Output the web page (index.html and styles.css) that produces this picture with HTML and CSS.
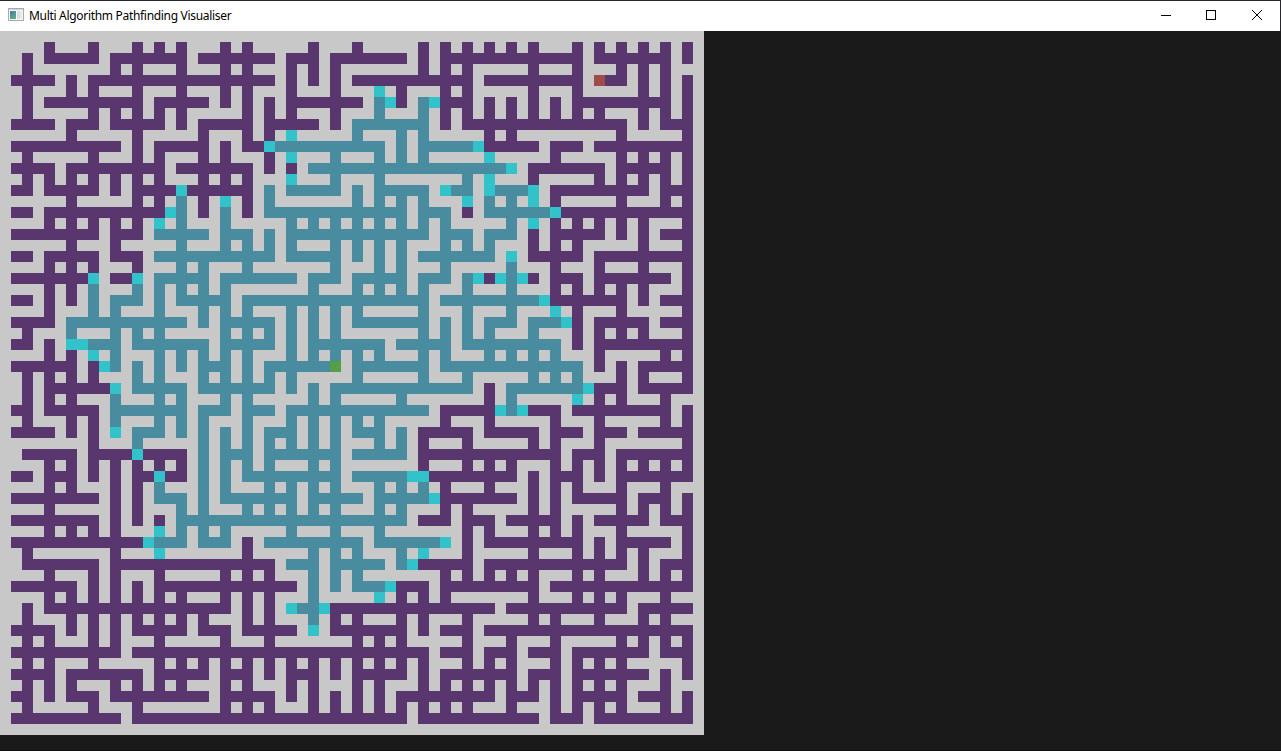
FILE: index.html
```html
<!DOCTYPE html>
<html lang="en">
<head>
<meta charset="utf-8">
<title>Multi Algorithm Pathfinding Visualiser</title>
<link rel="stylesheet" href="styles.css">
</head>
<body>
<div class="window">
  <header class="titlebar">
    <svg class="app-icon" width="16" height="14" viewBox="0 0 16 14" shape-rendering="crispEdges">
      <defs>
        <linearGradient id="pane" x1="0" y1="0" x2="0.6" y2="1">
          <stop offset="0" stop-color="#4478b0"/>
          <stop offset="1" stop-color="#5cb07c"/>
        </linearGradient>
      </defs>
      <rect x="0.5" y="0.5" width="15" height="12" fill="#f6f6f6" stroke="#a6abb2"/>
      <rect x="1" y="1" width="14" height="1" fill="#cfd3d7"/>
      <rect x="2" y="3" width="6" height="8" fill="url(#pane)"/>
      <rect x="9" y="3" width="3" height="8" fill="#dcdfe4"/>
      <rect x="12" y="3" width="2" height="8" fill="#e4ece4"/>
    </svg>
    <span class="title">Multi Algorithm Pathfinding Visualiser</span>
    <div class="controls">
      <span class="control minimize"><svg width="10" height="10" viewBox="0 0 10 10" shape-rendering="crispEdges"><path d="M0 5.5H10" stroke="#000" fill="none"/></svg></span>
      <span class="control"><svg width="10" height="10" viewBox="0 0 10 10" shape-rendering="crispEdges"><path d="M.5 .5H9.5V9.5H.5Z" stroke="#000" fill="none"/></svg></span>
      <span class="control"><svg width="10" height="10" viewBox="0 0 10 10"><path d="M0 0L10 10M10 0L0 10" stroke="#000" fill="none"/></svg></span>
    </div>
  </header>
  <main class="stage"><div class="maze" id="maze"></div></main>
</div>
<script src="maze.js"></script>
</body>
</html>
```
FILE: styles.css
```css
html, body { margin: 0; height: 100%; }
body { overflow: hidden; background: #1a1a1a; }
.window {
  box-sizing: border-box;
  width: 1281px;
  height: 751px;
  display: flex;
  flex-direction: column;
  border-top: 1px solid #28262b;
  border-bottom: 1px solid #111;
}
.titlebar {
  box-sizing: border-box;
  height: 30px;
  flex: none;
  display: flex;
  align-items: center;
  background: #fff;
  border-right: 1px solid #28262b;
  padding-left: 8px;
}
.app-icon { display: block; flex: none; margin-right: 5px; margin-bottom: 2px; }
.title {
  font: 12px/16px "Noto Sans", "Open Sans", sans-serif;
  letter-spacing: -0.31px;
  color: #000;
  white-space: nowrap;
}
.controls { display: flex; margin-left: auto; height: 100%; }
.control { box-sizing: border-box; width: 46px; display: flex; align-items: center; justify-content: center; padding-bottom: 2px; }
.minimize { padding-left: 2px; }
.control svg { display: block; }
.stage { flex: 1; background: #1a1a1a; }
.maze {
  width: 704px;
  display: grid;
  grid-template-columns: repeat(64, 11px);
  grid-auto-rows: 11px;
  background: #c8c8c8;
}
.open { background: #5a366e; }
.visited { background: #4a8c9f; }
.frontier { background: #32c3ca; }
.start { background: #559f46; }
.goal { background: #a04b4b; }
```
FILE: maze.js
```js
// One line per grid row, split into blocks of 22 columns by "/".
// Each entry is a column or a range of columns inside its block;
// a prefix sets the kind of cell: t visited, c frontier, s start, g goal.
const rows = `
//
4 8 12 14 16 20 / 0 6 10 16 18 20 / 0 2 4 8 10 12 14 16 18
2 4-8 10-16 18-21 / 0-2 4-6 8-14 16 18-21 / 0-8 10-16 18
2 10 12 16 20 / 0 4 6 8 16 18 20 / 4 8 12 14 16
1-4 6 8-21 / 0-2 4 6 8 10-20 / 0-8 g10 11-12 14 16 18
2 6 8 12 16 20 / 0 4 8 c12 14 18 20 / 4 8 14 16 18
2 4-12 14-18 20 / 0 2 4-10 t12 c13 14 t16 c17 18-20 / 0 2 4 6 8-16 18
2 8 10 12 14 16 / 0 2 4 8 t12 t16 18 20 / 0 2 4 6 8 10 14 16 18
1-4 6-8 10-14 16 18-21 / 0 2-6 8 t10-16 18 20-21 / 0-12 14 16-18
6 12 18 / 0 2 c4 t10 t14 t16 / 0 2 12 18
1-10 12 14-18 20 / 0-1 c2 t3-12 t14 t16-20 c21 / 0-4 6-8 10-18
2 8 12 14 18 20 / 2 c4 t8 t12 t14 t16 / c0 6 12 14 16 18
1-4 6-14 16-21 / 0 2 4 t6-21 / t0-1 c2 4-10 12-16 18
2 4 6 8 10 12 14 18 20 / 0 c4 t8 t12 t20 / c0 4 10 12 14 16 18
1-2 4-8 10 12-15 c16 17-21 / 0 t2 t4-8 t10 t12-16 c18 t19-20 / c0 t1-3 c4 6-14 16-18
6 12 14 t16 18 c20 / 0 t2 t10 t12 t14 t16 c20 / t0 t2 c4 6 12 16 18
1-2 4-14 c15 t16 18 t20 / 0 t2-14 t16-18 20 / t0-5 c6 7-18
4 6 8 10 12 c14 t16 t20 / t4 t6 t8 t10 t12 t14 t16 t18 / t2 c4 6 8 10 12 14 18
1-8 10-12 t14-18 t20-21 / t0 t2 t4-16 t18-20 / t0-2 4 6-10 12 14 16-18
6 10 t16 t20 / t0 t2 t4 t8 t10 t12 t14 t18 t20 / t0 4 6 8 14 18
1-2 4-8 10-12 t14-21 / t0-2 t4-8 t10 t12 t14 t16-21 / t0 c2 4-8 10-18
4 6 8 12 t16 t18 / t0 t8 t12 t14 t18 / t2 6 10 14 18
1-7 c8 10-11 c12 t14-18 t20-21 / t0-4 t6-8 t10-14 t16-18 t20 c21 / 0 c1 t2 c3 4 6-8 10-16 18
4 6 t8 t12 t14 t16 t18 t20 / t6 t10 t12 t14 t16 t20 / t2 6 8 10 12 14 18
1-2 4 6 t8 t10-12 t14 t16-20 / t0-16 t18-21 / t0-4 c5 6-12 14 16-18
4 t8 t10 t14 t18 t20 / t0 t4 t6 t8 t10 t16 t20 / t2 c6 8 12 18
1-4 t6-16 t18 t20-21 / t0-2 t4 t6 t8 t10-16 t18 t20 / t0-2 t4-6 c7 8 10-14 16-18
2 t6 t10 t12 t14 t20 / t0 t2 t4 t6 t8 t16 t18 t20 / t0 t4 8 10 12 14 18
1-2 4 c6-7 t8-10 t12-18 t20-21 / t0-2 t4 t6-12 t14-18 t20-21 / t0-6 8 10-18
4 6 c8 t10 t14 t16 t18 t20 / t0 t4 t6 t8 t10 t12 t16 t18 / t0 t2 t4 t6 10 16 18
1-6 8 c9 t10 t12 t14 t16 t18-20 / t0 t2-7 s8 t10-16 t18-21 / t0-8 10 12 14-18
2 4 6 8 t12 t14 t18 t20 / t0 t2 t4 t10 t16 t20 / t4 t6 t8 12 14 18
2 4-9 c10 t12-16 t18-21 / t0-2 t4 t6 t8-20 / 0 t2-8 c9 10-12 14-18
2 4 6 t10 t14 t16 t20 / t0 t6 t8 t14 / 0 t2 c8 10 12 16
1-2 4-8 t10-16 t18-20 / t0-2 t4-16 18-21 / 0 c1 t2 c3 4-6 8-16 18
2 6 8 t10 t14 t16 t18 / t0 t4 t6 t8 t10 t12 18 / 0 6 10 16 18
1-4 6 8 c10 t12-14 t16 t18 t20 / t0 t2-4 t6 t8 t10-12 t14 16-20 / 0-4 6-8 10-12 14-18
8 t12 t18 t20 / t0 t2 t4 t6 t8 t12 t14 16 20 / 4 6 10 18
2-6 8-11 c12 13-16 t18 t20-21 / t0 t2-8 t10-14 16-21 / 0-6 8-10 12-18
4 6 8 10 12 14 16 t18 t20 / t0 t2 t6 t8 16 20 / 0 2 6 8 10 12 14 16 18
1-2 4-6 8 10 12-13 c14 15-16 t18 t20 / t0-8 t10-14 c15-16 17-21 / 0-2 4 6-8 10 12-18
4 6 10 12 t14 t18 t20 / t2 t4 t6 t8 t12 t14 t16 18 / 0 4 6 8 12 16
1-8 10 12 t14-16 t18 t20-21 / t0-4 t6-10 t12-16 c17 18-21 / 0-2 4 6 8-12 14-16 18
4 10 12 t16 t18 / t0 t2 t4 t6 t8 t12 t14 18 20 / 4 6 12 14 16 18
1-8 10 12 14 t16-21 / t0-14 16-18 20-21 / 0 2-6 8 10-14 16-18
4 6 8 10 c14 t16 t18 t20 / t4 t8 t12 20 / 0 4 6 8 12 18
1-12 c13 t14-16 t18-20 / 0 t2-10 t12-17 c18 20 / 0-8 10 12-16 18
2 10 c14 / 0 t6 t8 t10 t14 c16 20 / 4 8 10 12 14 18
2-8 10-21 / 0-2 t4-6 t8-12 t14 c15 16-20 / 0-12 14 16-18
4 8 10 14 20 / 0 2 t6 t8 t10 18 20 / 0 2 4 8 10 14 16 18
1-6 8 10 12 14-21 / 0-4 t6 t8 t10-12 c13 14-16 18-21 / 0-4 6-18
4 6 8 10 12 14 16 20 / 0 2 t6 c12 14 16 18 / 4 8 10 12 16
2 4-20 / 0 2 c4 t5-6 c7 8-21 / 0 2-12 14-18
2 6 8 10 12 14 16 18 / 0 2 t6 8 10 14 16 20 / 4 6 10 14 16
1-4 6 8 10 12-16 18-20 / 0-4 c6 8-14 16 18-20 / 0-18
2 4 8 10 14 20 / 2 10 12 14 20 / 2 6 12 14 16 18
1-10 12-21 / 0-16 18-20 / 0-2 4-6 8-14 16-18
2 4 8 14 16 18 20 / 0 2 4 6 8 10 12 14 16 20 / 0 2 6 8 10 12 18
1-4 6-12 14-18 20-21 / 0 2 4-6 8 10-14 16 18-21 / 0-2 4-6 8-14 16 18
2 4 6 10 12 14 16 20 / 0 4 6 10 12 16 18 20 / 0 2 4 6 8 10 12 16
1-2 4 6-8 10-18 20-21 / 0-2 4 6 8 10 12 14-21 / 0 2-4 6 8-12 14-16 18
2 8 12 20 / 0 2 6 8 10 12 14 16 18 20 / 2 6 8 10 12 16 18
1-10 12-21 / 0-14 16-21 / 0-4 6-8 10-18
//
`.trim().split("\n");

const kinds = { "": "open", t: "visited", c: "frontier", s: "start", g: "goal" };
const maze = document.getElementById("maze");

for (const row of rows) {
  const cells = new Array(64).fill("wall");
  row.split("/").forEach((block, i) => {
    for (const [, kind, from, to] of block.matchAll(/([a-z]?)(\d+)(?:-(\d+))?/g)) {
      for (let x = +from; x <= +(to || from); x++) cells[i * 22 + x] = kinds[kind];
    }
  });
  for (const name of cells) {
    const cell = document.createElement("div");
    cell.className = name;
    maze.append(cell);
  }
}
```
